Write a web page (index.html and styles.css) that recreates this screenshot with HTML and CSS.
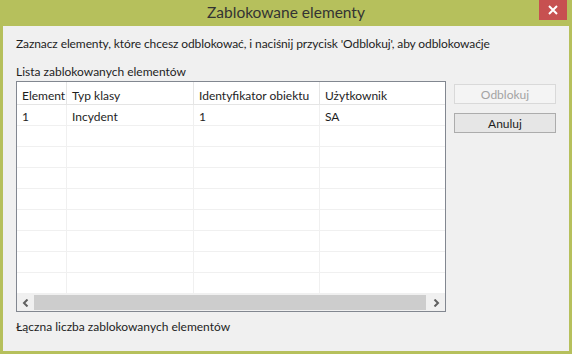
FILE: index.html
```html
<!DOCTYPE html>
<html>

<head>
    <meta charset="utf-8">
    <title>Zablokowane elementy</title>
    <link rel="stylesheet" href="styles.css">
</head>

<body>
    <div class="window">
        <div class="titlebar">
            <span class="title">Zablokowane elementy</span>
            <div class="close">
                <svg width="10" height="10" viewBox="0 0 10 10">
                    <path d="M1 1 L9 9 M9 1 L1 9" stroke="#fff" stroke-width="2" />
                </svg>
            </div>
        </div>

        <div class="content">
            <p class="info">Zaznacz elementy, które chcesz odblokować, i naciśnij przycisk 'Odblokuj', aby odblokowaćje</p>
            <p class="label">Lista zablokowanych elementów</p>

            <div class="main">
                <div class="list">
                    <div class="row header">
                        <div class="cell">Element</div>
                        <div class="cell">Typ klasy</div>
                        <div class="cell">Identyfikator obiektu</div>
                        <div class="cell">Użytkownik</div>
                    </div>
                    <div class="row">
                        <div class="cell">1</div>
                        <div class="cell">Incydent</div>
                        <div class="cell">1</div>
                        <div class="cell">SA</div>
                    </div>
                    <div class="row"><div class="cell"></div><div class="cell"></div><div class="cell"></div><div class="cell"></div></div>
                    <div class="row"><div class="cell"></div><div class="cell"></div><div class="cell"></div><div class="cell"></div></div>
                    <div class="row"><div class="cell"></div><div class="cell"></div><div class="cell"></div><div class="cell"></div></div>
                    <div class="row"><div class="cell"></div><div class="cell"></div><div class="cell"></div><div class="cell"></div></div>
                    <div class="row"><div class="cell"></div><div class="cell"></div><div class="cell"></div><div class="cell"></div></div>
                    <div class="row"><div class="cell"></div><div class="cell"></div><div class="cell"></div><div class="cell"></div></div>
                    <div class="row"><div class="cell"></div><div class="cell"></div><div class="cell"></div><div class="cell"></div></div>
                    <div class="row"><div class="cell"></div><div class="cell"></div><div class="cell"></div><div class="cell"></div></div>

                    <div class="scrollbar">
                        <div class="arrow">
                            <svg width="8" height="8" viewBox="0 0 8 8">
                                <path d="M5.5 0.5 L2 4 L5.5 7.5" fill="none" stroke="#606060" stroke-width="2" />
                            </svg>
                        </div>
                        <div class="thumb"></div>
                        <div class="arrow">
                            <svg width="8" height="8" viewBox="0 0 8 8">
                                <path d="M2.5 0.5 L6 4 L2.5 7.5" fill="none" stroke="#606060" stroke-width="2" />
                            </svg>
                        </div>
                    </div>
                </div>

                <div class="buttons">
                    <button class="btn" disabled>Odblokuj</button>
                    <button class="btn">Anuluj</button>
                </div>
            </div>

            <p class="total">Łączna liczba zablokowanych elementów</p>
        </div>
    </div>
</body>

</html>
```

FILE: styles.css
```css
body {
    margin: 0;
    font-family: Lato, 'Noto Sans', sans-serif;
    font-size: 12px;
    color: #1e1e1e;
}

.window {
    width: 572px;
    height: 354px;
    box-sizing: border-box;
    background-color: #b6c05c;
    padding: 0 3px 3px 3px;
    display: flex;
    flex-direction: column;
}

.titlebar {
    height: 26px;
    display: flex;
    align-items: center;
    justify-content: center;
    position: relative;
}

.title {
    font-size: 15.5px;
    color: #333333;
    margin-top: -2px;
}

.close {
    position: absolute;
    top: 0;
    right: 2px;
    width: 28px;
    height: 20px;
    background-color: #c75050;
    display: flex;
    align-items: center;
    justify-content: center;
}

.content {
    flex: 1;
    background-color: #f0f0f0;
    padding: 10px 13px 0 13px;
    display: flex;
    flex-direction: column;
}

p {
    margin: 0;
    line-height: 16px;
}

.info {
    letter-spacing: -0.1px;
}

.label {
    margin-top: 12px;
}

.main {
    display: flex;
    gap: 8px;
    margin-top: 1px;
}

.list {
    width: 430px;
    border: 1px solid #828790;
    background-color: #ffffff;
}

.row {
    display: grid;
    grid-template-columns: 50px 127px 126px 1fr;
    height: 21px;
    border-bottom: 1px solid #f0f0f0;
    box-sizing: border-box;
}

.row.header {
    height: 23px;
    border-bottom-color: #e5e5e5;
}

.cell {
    border-right: 1px solid #f0f0f0;
    padding: 3px 0 0 5px;
    line-height: 17px;
    white-space: nowrap;
    overflow: hidden;
}

.header .cell {
    border-right-color: #e5e5e5;
    padding-top: 6px;
    line-height: 16px;
}

.cell:last-child {
    border-right: none;
}

.scrollbar {
    height: 17px;
    display: flex;
    background-color: #f0f0f0;
}

.arrow {
    width: 17px;
    display: flex;
    align-items: center;
    justify-content: center;
}

.arrow:last-child {
    width: 19px;
}

.thumb {
    flex: 1;
    background-color: #cdcdcd;
    margin: 1px 0;
}

.buttons {
    display: flex;
    flex-direction: column;
    gap: 9px;
    margin-top: 3px;
}

.btn {
    width: 102px;
    height: 20px;
    font-family: Lato, 'Noto Sans', sans-serif;
    font-size: 12px;
    color: #1e1e1e;
    background-color: #e6e6e6;
    border: 1px solid #acacac;
    padding: 0;
}

.btn:disabled {
    color: #a3a3a3;
    background-color: #f4f4f4;
    border-color: #d9d9d9;
}

.total {
    margin-top: 7px;
}
```
